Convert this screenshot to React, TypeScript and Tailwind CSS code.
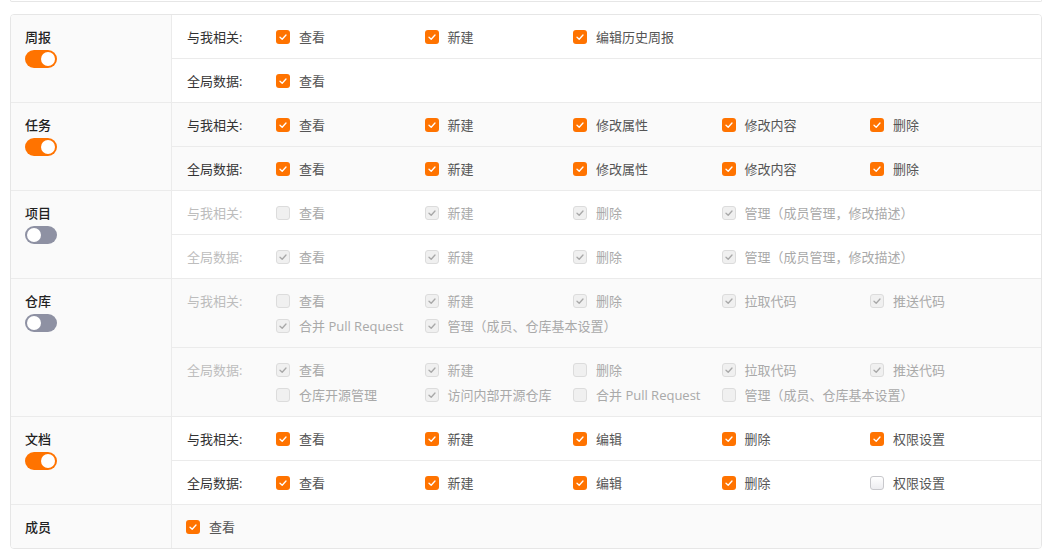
import React from 'react';

type Item = { text: string; checked: boolean };
type Row = { label: string; items: Item[] };
type Section = { title: string; on?: boolean; disabled?: boolean; rows?: Row[]; items?: Item[] };

// helper: build items from "text:1" pairs
const it = (list: [string, number][]): Item[] => list.map(([text, c]) => ({ text, checked: c === 1 }));

const sections: Section[] = [
    {
        title: '周报',
        on: true,
        rows: [
            { label: '与我相关:', items: it([['查看', 1], ['新建', 1], ['编辑历史周报', 1]]) },
            { label: '全局数据:', items: it([['查看', 1]]) },
        ],
    },
    {
        title: '任务',
        on: true,
        rows: [
            { label: '与我相关:', items: it([['查看', 1], ['新建', 1], ['修改属性', 1], ['修改内容', 1], ['删除', 1]]) },
            { label: '全局数据:', items: it([['查看', 1], ['新建', 1], ['修改属性', 1], ['修改内容', 1], ['删除', 1]]) },
        ],
    },
    {
        title: '项目',
        on: false,
        disabled: true,
        rows: [
            { label: '与我相关:', items: it([['查看', 0], ['新建', 1], ['删除', 1], ['管理（成员管理，修改描述）', 1]]) },
            { label: '全局数据:', items: it([['查看', 1], ['新建', 1], ['删除', 1], ['管理（成员管理，修改描述）', 1]]) },
        ],
    },
    {
        title: '仓库',
        on: false,
        disabled: true,
        rows: [
            {
                label: '与我相关:',
                items: it([
                    ['查看', 0], ['新建', 1], ['删除', 1], ['拉取代码', 1], ['推送代码', 1],
                    ['合并 Pull Request', 1], ['管理（成员、仓库基本设置）', 1],
                ]),
            },
            {
                label: '全局数据:',
                items: it([
                    ['查看', 1], ['新建', 1], ['删除', 0], ['拉取代码', 1], ['推送代码', 1],
                    ['仓库开源管理', 0], ['访问内部开源仓库', 1], ['合并 Pull Request', 0], ['管理（成员、仓库基本设置）', 0],
                ]),
            },
        ],
    },
    {
        title: '文档',
        on: true,
        rows: [
            { label: '与我相关:', items: it([['查看', 1], ['新建', 1], ['编辑', 1], ['删除', 1], ['权限设置', 1]]) },
            { label: '全局数据:', items: it([['查看', 1], ['新建', 1], ['编辑', 1], ['删除', 1], ['权限设置', 0]]) },
        ],
    },
    {
        title: '成员',
        items: it([['查看', 1]]),
    },
];

const Check: React.FC<{ color: string }> = ({ color }) => (
    <svg width="10" height="10" viewBox="0 0 10 10" fill="none">
        <polyline points="2,5.2 4.2,7.3 8,3" stroke={color} strokeWidth="1.3" strokeLinecap="round" strokeLinejoin="round" />
    </svg>
);

const Checkbox: React.FC<{ checked: boolean; disabled?: boolean }> = ({ checked, disabled }) => {
    if (disabled) {
        return (
            <span className="w-[14px] h-[14px] shrink-0 rounded-[3px] border border-[#dcdcdc] bg-[#f0f0f0] flex items-center justify-center">
                {checked && <Check color="#a8a8a8" />}
            </span>
        );
    }
    if (checked) {
        return (
            <span className="w-[14px] h-[14px] shrink-0 rounded-[3px] bg-[#ff7300] flex items-center justify-center">
                <Check color="#ffffff" />
            </span>
        );
    }
    return <span className="w-[14px] h-[14px] shrink-0 rounded-[3px] border border-[#c8c8cc] bg-gradient-to-b from-white to-[#ededf0]" />;
};

const Toggle: React.FC<{ on: boolean }> = ({ on }) => (
    <div className={`mt-[4px] w-[32px] h-[18px] rounded-full flex items-center px-[2px] ${on ? 'bg-[#ff7300] justify-end' : 'bg-[#8e91a3] justify-start'}`}>
        <span className="w-[14px] h-[14px] rounded-full bg-white" />
    </div>
);

const Items: React.FC<{ items: Item[]; disabled?: boolean }> = ({ items, disabled }) => (
    <div className="flex flex-wrap flex-1 gap-y-[7px]">
        {items.map((item, i) => (
            <div key={i} className="w-[148.5px] h-[18px] flex items-center">
                <Checkbox checked={item.checked} disabled={disabled} />
                <span className={`ml-[9px] whitespace-nowrap ${disabled ? 'text-[#a9a9a9]' : 'text-[#555]'}`}>{item.text}</span>
            </div>
        ))}
    </div>
);

export default function App() {
    return (
        <div
            className="bg-white min-h-screen pl-[10px] pr-[7px] text-[13px] leading-[18px]"
            style={{ fontFamily: '"Open Sans", "Noto Sans CJK SC", sans-serif' }}
        >
            {/* tail of the card above */}
            <div className="h-[2px] border border-t-0 border-[#e6e6e6] rounded-b-[3px] mb-[12px]" />

            <div className="border border-[#e6e6e6] rounded-[4px] overflow-hidden">
                {sections.map((sec, si) => {
                    const stripe = si % 2 === 1 ? 'bg-[#fafafa]' : 'bg-white';
                    return (
                        <div key={sec.title} className={`flex ${si < sections.length - 1 ? 'border-b border-[#ebebeb]' : ''}`}>
                            {/* Left cell */}
                            <div className="w-[161px] shrink-0 bg-[#fafafa] border-r border-[#ebebeb] pl-[14px] pt-[13px]">
                                <div className="font-medium text-[#222]">{sec.title}</div>
                                {sec.on !== undefined && <Toggle on={sec.on} />}
                            </div>

                            {/* Right cell */}
                            <div className={`flex-1 ${stripe}`}>
                                {sec.rows ? (
                                    sec.rows.map((row, ri) => (
                                        <div
                                            key={ri}
                                            className={`flex pl-[15px] pt-[13px] pb-[12px] ${ri < sec.rows!.length - 1 ? 'border-b border-[#ebebeb]' : ''}`}
                                        >
                                            <div className={`w-[89px] shrink-0 h-[18px] ${sec.disabled ? 'text-[#bdbdbd]' : 'text-[#333]'}`}>
                                                {row.label}
                                            </div>
                                            <Items items={row.items} disabled={sec.disabled} />
                                        </div>
                                    ))
                                ) : (
                                    <div className="flex pl-[14px] pt-[13px] pb-[12px]">
                                        <Items items={sec.items!} />
                                    </div>
                                )}
                            </div>
                        </div>
                    );
                })}
            </div>
        </div>
    );
}
